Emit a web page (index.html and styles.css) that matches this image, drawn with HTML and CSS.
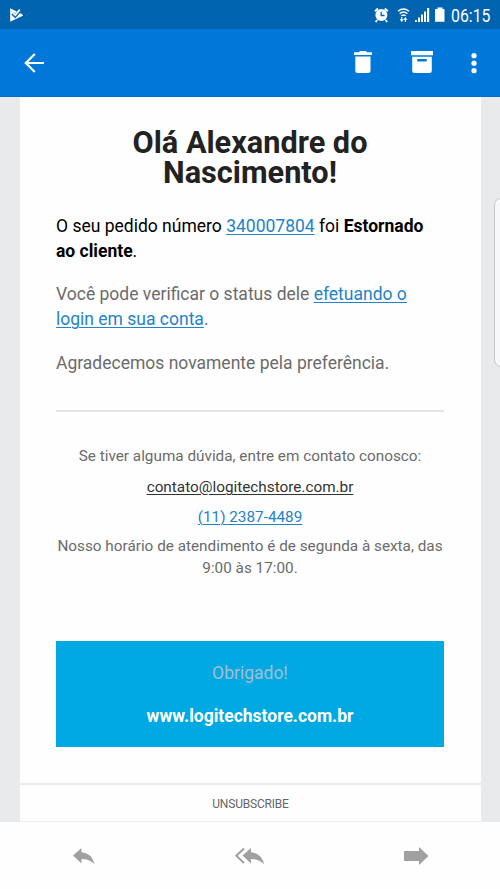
FILE: index.html
```html
<!DOCTYPE html>
<html lang="pt-BR">
<head>
<meta charset="utf-8">
<title>Pedido 340007804</title>
<link rel="stylesheet" href="styles.css">
</head>
<body>
<header class="status">
  <svg class="play" width="14" height="14" viewBox="0 0 14 14"><path fill="#fff" d="M.2.3 10.8 5.5 12.8 6.8v1L.2 13.8z"/><path d="m2.6 5.3 2.6 2.6L11 1.3" fill="none" stroke="#0063b0" stroke-width="3.4"/><path d="m2.8 4.7 2.5 2.5L9.8 1.6" fill="none" stroke="#fff" stroke-width="1.8"/></svg>
  <div class="indicators">
    <svg width="15" height="16" viewBox="0 0 15 16"><circle cx="7.4" cy="8" r="6" fill="#fff"/><path d="M1 4.2 4 1.5M10.8 1.5l3 2.7M3.2 13l-1.6 2M11.6 13l1.6 2" stroke="#fff" stroke-width="1.9"/><path d="M7.2 4.8v3.7h3.3" fill="none" stroke="#0063b0" stroke-width="1.3"/></svg>
    <svg class="wifi" width="13" height="16" viewBox="0 0 13 16"><g fill="none" stroke="#fff" stroke-width="1.4"><path d="M1 4.3q5.5-4.6 11 0M2.7 6.6q3.8-3.2 7.6 0M4.4 8.8q2.1-1.7 4.2 0"/><path d="M4.7 10v4M8.4 15v-4" stroke-width="1.2"/></g><path d="M2.7 12.3h4l-2 2.6zM6.4 12.7h4l-2-2.6z" fill="#fff"/></svg>
    <svg class="signal" width="15" height="16" viewBox="0 0 15 16"><path fill="#fff" d="M0 13h1.8v2H0zM3 10.5h2V15H3zM6 7.5h2V15H6zM9 4.5h2V15H9zM12 1h2.2v14H12z"/></svg>
    <svg class="battery" width="10" height="16" viewBox="0 0 10 16"><path fill="#fff" d="M2.5.5h5V2h1.3q.7 0 .7.7v12.1H0V2.7Q0 2 .7 2h1.8z"/></svg>
    <time>06:15</time>
  </div>
</header>
<nav class="toolbar">
  <svg class="back" width="20" height="20" viewBox="0 0 20 20"><path d="M20 10H1.8M10.8 1 1.8 10l9 9" fill="none" stroke="#fff" stroke-width="2.2"/></svg>
  <svg class="trash" width="18" height="23" viewBox="0 0 18 23"><path fill="#fff" d="M0 1.3h5L6 0h6l1 1.3h5V4H0zM1.3 5.5h15.2v14q0 2.5-2.5 2.5H3.8q-2.5 0-2.5-2.5z"/></svg>
  <svg class="archive" width="22" height="23" viewBox="0 0 22 23"><path fill="#fff" fill-rule="evenodd" d="M0 0h22v4.3H0zM1.2 5.7h19.6v14.1q0 2.2-2.2 2.2H3.4q-2.2 0-2.2-2.2zM6.3 8v2.4h9.4V8z"/></svg>
  <svg class="more" width="6" height="22" viewBox="0 0 6 22"><g fill="#fff"><circle cx="3" cy="3.7" r="2.6"/><circle cx="3" cy="11.2" r="2.6"/><circle cx="3" cy="18.7" r="2.6"/></g></svg>
</nav>
<main class="mail">
  <article class="sheet">
    <h1>Olá Alexandre do<br>Nascimento!</h1>
    <p class="lead">O seu pedido número <a href="#">340007804</a> foi <b>Estornado<br>ao cliente</b>.</p>
    <p class="check">Você pode verificar o status dele <a href="#">efetuando o<br>login em sua conta</a>.</p>
    <p class="regards">Agradecemos novamente pela preferência.</p>
    <section class="contact">
      <p>Se tiver alguma dúvida, entre em contato conosco:</p>
      <p><a class="email" href="#">contato@logitechstore.com.br</a></p>
      <p class="phone"><a href="#">(11) 2387-4489</a></p>
      <p class="hours">Nosso horário de atendimento é de segunda à sexta, das<br>9:00 às 17:00.</p>
    </section>
    <section class="thanks">
      <p>Obrigado!</p>
      <strong>www.logitechstore.com.br</strong>
    </section>
  </article>
  <div class="unsubscribe">UNSUBSCRIBE</div>
  <div class="handle"></div>
</main>
<footer class="actions">
  <svg width="22" height="18" viewBox="0 0 22 18"><path fill="#9fa0a2" d="M0 8.5 8.5 1v4.3Q18.5 6 21.7 17.3 16.5 11.9 8.5 12v4.5z"/></svg>
  <svg width="30" height="18" viewBox="0 0 30 18"><path fill="#9fa0a2" d="M7.5 8.5 16 1v4.3Q26 6 29.4 17.3 24 11.9 16 12v4.5z"/><path d="M9 1.5 1.3 8.7 9 16" fill="none" stroke="#9fa0a2" stroke-width="2"/></svg>
  <svg width="25" height="18" viewBox="0 0 25 18"><path fill="#9fa0a2" d="M0 4h15V0l9.5 9-9.5 9v-4H0z"/></svg>
</footer>
</body>
</html>
```
FILE: styles.css
```css
* { box-sizing: border-box; }
body {
  margin: 0;
  width: 500px;
  height: 889px;
  overflow: hidden;
  display: flex;
  flex-direction: column;
  background: #fefefe;
  font-family: Roboto, sans-serif;
}
svg { display: block; flex: none; }
p, h1 { margin: 0; white-space: nowrap; }
a { color: #2582c8; text-decoration: underline; text-underline-offset: 2px; text-decoration-thickness: 1px; }

.status {
  height: 29px;
  flex: none;
  background: #0063b0;
  display: flex;
  align-items: center;
  justify-content: space-between;
  padding: 0 10px;
}
.indicators { display: flex; align-items: center; color: #fff; }
.wifi { margin-left: 8px; }
.signal { margin-left: 5px; }
.battery { margin-left: 5px; }
time {
  margin-left: 6px;
  width: 39px;
  padding-top: 2px;
  font-size: 18px;
  line-height: 20px;
  white-space: nowrap;
  transform: scaleX(.88);
  transform-origin: left;
}

.toolbar {
  height: 68px;
  flex: none;
  background: #0078d9;
  border-bottom: 1px solid #0070cb;
  display: flex;
  align-items: center;
  padding: 0 23px 0 24px;
}
.trash { margin-left: auto; }
.archive { margin-left: 39px; }
.more { margin-left: 38px; }

.mail {
  position: relative;
  height: 725px;
  flex: none;
  background: #e9eaec;
  padding: 0 19px 0 20px;
  overflow: hidden;
}
.sheet {
  height: 688px;
  background: #fefefe;
  border-bottom: 2px solid #ebecee;
  border-radius: 0 0 3px 3px;
  padding: 31px 37px 0 36px;
  display: flex;
  flex-direction: column;
}
h1 { font-size: 30.7px; line-height: 30px; text-align: center; color: #222; }
.sheet > p { font-size: 17.5px; line-height: 25.5px; color: #6b6b6b; }
.sheet > .lead { color: #000; margin-top: 25.5px; }
.check { margin-top: 17px; }
.regards { margin-top: 18.5px; }
.contact {
  margin-top: 33px;
  border-top: 2px solid #e6e6e6;
  padding-top: 34px;
  text-align: center;
  font-size: 15.3px;
  line-height: 21.5px;
  color: #6b6b6b;
}
.email { color: #333; }
.contact p + p { margin-top: 10px; }
.contact .phone { margin-top: 8.5px; }
.contact .hours { margin-top: 7.5px; }
.thanks {
  height: 106px;
  margin-top: 62px;
  flex: none;
  background: #00a9e2;
  text-align: center;
  padding-top: 20px;
  font-size: 17.5px;
  line-height: 25px;
  color: #a5bfd0;
}
.thanks strong { display: block; margin-top: 18px; color: #fff; }
.unsubscribe {
  height: 37px;
  background: #fefefe;
  border-bottom: 1px solid #eee;
  text-align: center;
  font-size: 12px;
  letter-spacing: -.2px;
  line-height: 38px;
  color: #666;
}
.handle {
  position: absolute;
  top: 101px;
  right: -8px;
  width: 14px;
  height: 169px;
  border: 1px solid #c8c9cd;
  border-radius: 7px;
  background: #f7f8fa;
}
.actions {
  flex: 1;
  display: flex;
  align-items: center;
  justify-content: space-between;
  padding: 1px 71px 0 73px;
}
```
